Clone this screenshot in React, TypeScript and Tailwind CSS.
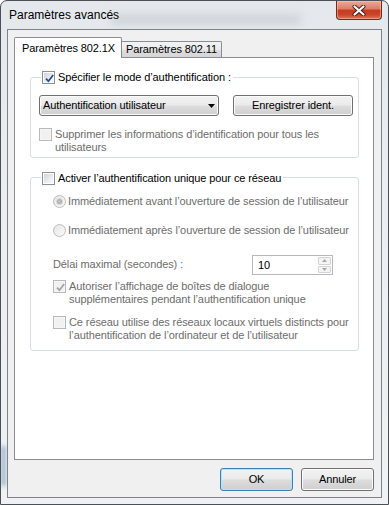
import type { ReactNode } from 'react';

// Win7 style "Paramètres avancés" dialog (802.1X tab).

const GRAY = 'text-[#6d6d6d]';

function CheckBox({ checked, disabled }: { checked?: boolean; disabled?: boolean }) {
  return (
    <span
      className={`relative flex h-[13px] w-[13px] shrink-0 border p-[1px] ${
        disabled ? 'border-[#b9b9b9] bg-[#f6f6f6]' : 'border-[#8e8f8f] bg-white'
      }`}
    >
      <span
        className={`h-full w-full ${
          disabled
            ? 'bg-[#f1f1f1]'
            : 'bg-[linear-gradient(135deg,#cfd3d8_0%,#eceef0_60%,#fbfbfb_100%)]'
        }`}
      />
      {checked && (
        <svg className="absolute left-[1px] top-[1px]" width="11" height="11" viewBox="0 0 11 11">
          <path
            d="M2 5.6 L4.4 8.2 L9.2 2"
            fill="none"
            stroke={disabled ? '#a2a2a2' : '#26489a'}
            strokeWidth="1.7"
          />
        </svg>
      )}
    </span>
  );
}

function Radio({ checked }: { checked?: boolean }) {
  return (
    <span className="flex h-[13px] w-[13px] shrink-0 items-center justify-center rounded-full border border-[#bcbcbc] bg-[linear-gradient(135deg,#e6e6e6,#fafafa)]">
      {checked && (
        <span className="h-[5px] w-[5px] rounded-full bg-[radial-gradient(circle,#c8c8c8,#9c9c9c)] ring-1 ring-[#d8d8d8]" />
      )}
    </span>
  );
}

function Label({ children, className = '' }: { children: ReactNode; className?: string }) {
  return <span className={`whitespace-nowrap leading-[13px] ${className}`}>{children}</span>;
}

function WinButton({ children, def, className = '' }: { children: ReactNode; def?: boolean; className?: string }) {
  return (
    <div
      className={`flex h-[21px] items-center rounded-[3px] border bg-[linear-gradient(#f2f2f2_0%,#ebebeb_48%,#dddddd_52%,#cfcfcf_100%)] ${
        def
          ? 'border-[#3c7fb1] shadow-[inset_0_0_0_1px_#b7e2f8]'
          : 'border-[#707070] shadow-[inset_0_0_0_1px_#fbfbfb]'
      } ${className}`}
    >
      {children}
    </div>
  );
}

export default function App() {
  return (
    <div className="relative flex h-[505px] w-[389px] flex-col overflow-hidden rounded-t-[7px] border border-[#4a5058] bg-[linear-gradient(#e4e8ec_0%,#eceef1_40%,#f0f1f3_100%)] font-['Liberation_Sans',Arial,sans-serif] text-[11px] tracking-[-0.1px] text-black">
      {/* blurred glass shapes behind the frame */}
      <span className="absolute left-[110px] top-[14px] h-[9px] w-[190px] bg-[#b9bcc0] opacity-50 blur-[4px]" />
      <span className="absolute left-[0px] top-[445px] h-[40px] w-[5px] bg-[#6f93b5] opacity-60 blur-[2px]" />

      {/* title bar */}
      <div className="relative flex h-[28px] shrink-0 items-start justify-between pl-[8px] pr-[6px]">
        <span className="mt-[7px] text-[12px] leading-[14px] tracking-normal">Paramètres avancés</span>
        <div className="flex h-[19px] w-[46px] items-center justify-center rounded-b-[4px] border border-t-0 border-[#6f2c1e] bg-[linear-gradient(#e9aa9b_0%,#dd7c66_45%,#c43c22_50%,#c9442a_75%,#e2735a_100%)] shadow-[inset_0_0_0_1px_rgba(255,210,200,0.45)]">
          <svg width="14" height="11" viewBox="0 0 14 11">
            <path d="M2.5 1.5 L11.5 9.5 M11.5 1.5 L2.5 9.5" stroke="#4a1a10" strokeWidth="4" strokeLinecap="round" />
            <path d="M2.5 1.5 L11.5 9.5 M11.5 1.5 L2.5 9.5" stroke="#ffffff" strokeWidth="2.2" strokeLinecap="round" />
          </svg>
        </div>
      </div>

      {/* client area */}
      <div className="relative mx-[6px] flex h-[469px] flex-col border border-[#7c838b] bg-[#f0f0f0] pl-[6px] pt-[7px]">
        {/* tabs */}
        <div className="flex h-[20px] items-end">
          <div className="relative z-10 mb-[-1px] flex h-[21px] w-[108px] items-center rounded-t-[2px] border border-b-0 border-[#898c95] bg-white pl-[7px]">
            <Label>Paramètres 802.1X</Label>
          </div>
          <div className="flex h-[16px] w-[100px] items-center rounded-tr-[2px] border border-b-0 border-l-0 border-[#898c95] bg-[linear-gradient(#f3f3f3_0%,#ebebeb_50%,#dedede_51%,#d6d6d6_100%)] pl-[4px]">
            <Label>Paramètres 802.11</Label>
          </div>
        </div>

        {/* tab panel */}
        <div className="flex h-[403px] w-[360px] flex-col border border-[#898c95] bg-white pl-[15px] pt-[19px]">
          {/* group 1 */}
          <div className="relative flex h-[81px] w-[329px] flex-col rounded-[3px] border border-[#d5dfe5] pl-[8px] pt-[17px]">
            <div className="absolute left-[10px] top-[-7px] flex items-start gap-[3px] bg-white pl-[1px] pr-[2px]">
              <CheckBox checked />
              <Label>Spécifier le mode d’authentification :</Label>
            </div>
            <div className="flex">
              <WinButton className="w-[180px] justify-between pl-[3px] pr-[3px]">
                <span>Authentification utilisateur</span>
                <svg width="7" height="4" viewBox="0 0 7 4">
                  <path d="M0 0 H7 L3.5 4 Z" fill="#000" />
                </svg>
              </WinButton>
              <WinButton className="ml-[14px] w-[120px] justify-center">Enregistrer ident.</WinButton>
            </div>
            <div className="mt-[12px] flex items-start gap-[3px]">
              <CheckBox disabled />
              <Label className={GRAY}>
                Supprimer les informations d’identification pour tous les
                <br />
                utilisateurs
              </Label>
            </div>
          </div>

          {/* group 2 */}
          <div className="relative mt-[19px] flex h-[174px] w-[329px] flex-col rounded-[3px] border border-[#d5dfe5] pl-[22px] pt-[17px]">
            <div className="absolute left-[10px] top-[-6px] flex items-start gap-[3px] bg-white pl-[1px] pr-[2px]">
              <CheckBox />
              <Label>Activer l’authentification unique pour ce réseau</Label>
            </div>
            <div className="flex items-start gap-[2px]">
              <Radio checked />
              <Label className={GRAY}>Immédiatement avant l’ouverture de session de l’utilisateur</Label>
            </div>
            <div className="mt-[16px] flex items-start gap-[2px]">
              <Radio />
              <Label className={GRAY}>Immédiatement après l’ouverture de session de l’utilisateur</Label>
            </div>
            <div className="mt-[18px] flex w-[280px] items-center justify-between">
              <Label className={`pb-[2px] ${GRAY}`}>Délai maximal (secondes) :</Label>
              <div className="flex h-[20px] w-[81px] items-center justify-between border border-[#b5b9bd] bg-white pl-[5px]">
                <span className="leading-[13px]">10</span>
                <div className="flex h-full w-[15px] flex-col gap-[1px] p-[1px]">
                  <div className="flex flex-1 items-center justify-center rounded-[1px] border border-[#d2d4d6] bg-[#f4f4f4]">
                    <svg width="5" height="3" viewBox="0 0 5 3">
                      <path d="M0 3 H5 L2.5 0 Z" fill="#a8a8a8" />
                    </svg>
                  </div>
                  <div className="flex flex-1 items-center justify-center rounded-[1px] border border-[#d2d4d6] bg-[#f4f4f4]">
                    <svg width="5" height="3" viewBox="0 0 5 3">
                      <path d="M0 0 H5 L2.5 3 Z" fill="#a8a8a8" />
                    </svg>
                  </div>
                </div>
              </div>
            </div>
            <div className="mt-[5px] flex items-start gap-[3px]">
              <CheckBox checked disabled />
              <Label className={GRAY}>
                Autoriser l’affichage de boîtes de dialogue
                <br />
                supplémentaires pendant l’authentification unique
              </Label>
            </div>
            <div className="mt-[10px] flex items-start gap-[3px]">
              <CheckBox disabled />
              <Label className={GRAY}>
                Ce réseau utilise des réseaux locaux virtuels distincts pour
                <br />
                l’authentification de l’ordinateur et de l’utilisateur
              </Label>
            </div>
          </div>
        </div>

        {/* dialog buttons */}
        <div className="mt-[8px] flex w-[360px] justify-end gap-[8px]">
          <WinButton def className="h-[23px] w-[73px] justify-center">OK</WinButton>
          <WinButton className="h-[23px] w-[73px] justify-center">Annuler</WinButton>
        </div>
      </div>
    </div>
  );
}
